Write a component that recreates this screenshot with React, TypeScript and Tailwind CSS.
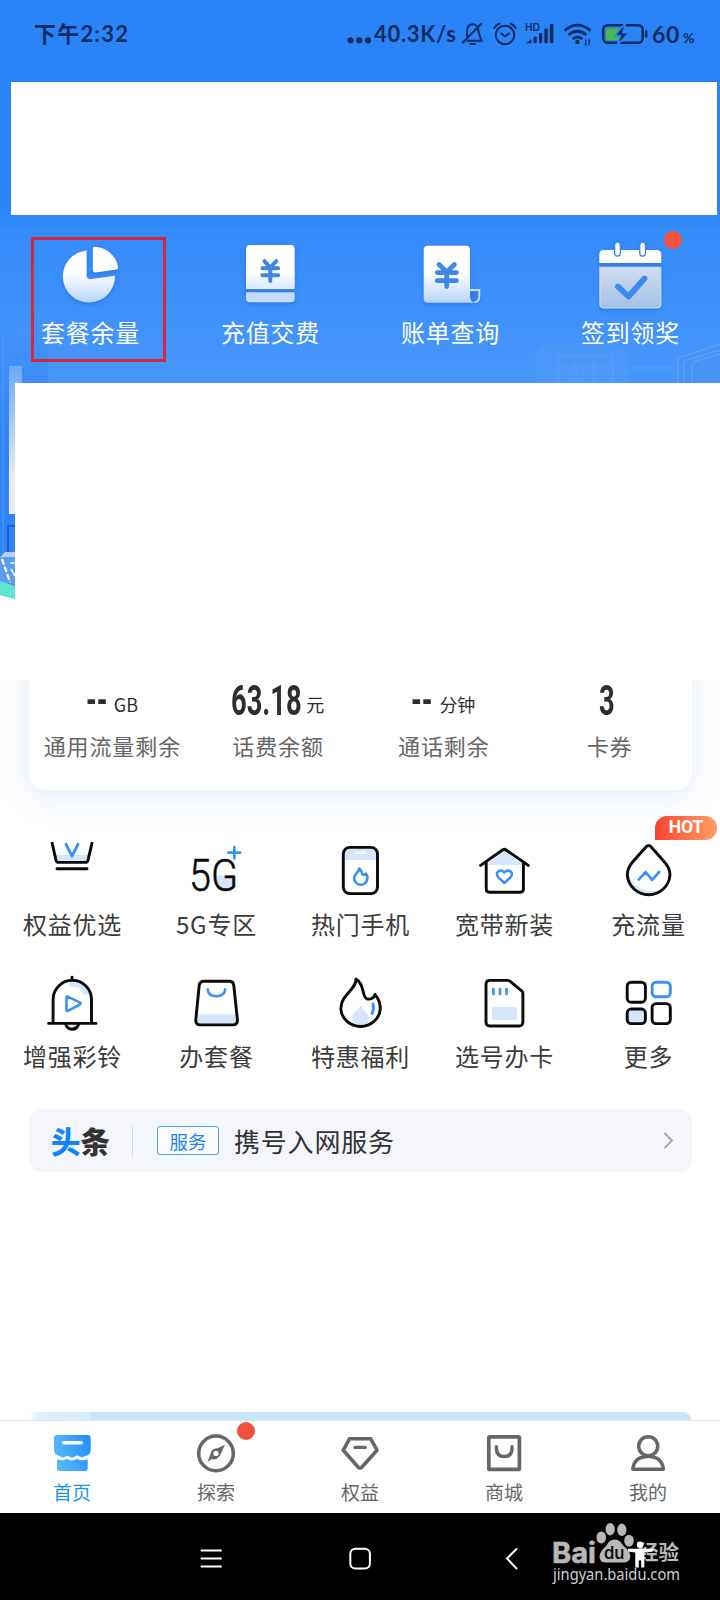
import { ReactNode } from 'react';

const BLUE = '#3a94ee';
const PALE = '#d6e6fa';

const quickActions = [
  { label: '套餐余量', icon: <PieIcon />, active: true },
  { label: '充值交费', icon: <RechargeIcon /> },
  { label: '账单查询', icon: <BillIcon /> },
  { label: '签到领奖', icon: <CheckInIcon />, dot: true },
];

const stats = [
  { value: '--', unit: 'GB', label: '通用流量剩余', width: 'w-[22px]' },
  { value: '63.18', unit: '元', label: '话费余额', width: 'w-[69px]' },
  { value: '--', unit: '分钟', label: '通话剩余', width: 'w-[22px]' },
  { value: '3', unit: '', label: '卡券', width: 'w-[21px]' },
];

const services = [
  { label: '权益优选', icon: <CrownIcon /> },
  { label: '5G专区', icon: <FiveGIcon /> },
  { label: '热门手机', icon: <PhoneIcon /> },
  { label: '宽带新装', icon: <HouseIcon /> },
  { label: '充流量', icon: <DropIcon />, hot: true },
  { label: '增强彩铃', icon: <BellIcon /> },
  { label: '办套餐', icon: <BagIcon /> },
  { label: '特惠福利', icon: <FlameIcon /> },
  { label: '选号办卡', icon: <SimIcon /> },
  { label: '更多', icon: <MoreIcon /> },
];

const tabs = [
  { label: '首页', icon: <HomeTabIcon />, active: true },
  { label: '探索', icon: <CompassIcon />, dot: true },
  { label: '权益', icon: <DiamondIcon /> },
  { label: '商城', icon: <ShopIcon /> },
  { label: '我的', icon: <UserIcon /> },
];

/* ---------- hero icons (80 x 80) ---------- */

function HeroSvg({ children }: { children: ReactNode }) {
  return (
    <svg width="80" height="80" viewBox="0 0 80 80" fill="none" className="overflow-visible drop-shadow-[0_2px_2px_rgba(20,80,180,0.35)]">
      <defs>
        <linearGradient id="heroFill" x1="0" y1="10" x2="0" y2="68" gradientUnits="userSpaceOnUse">
          <stop offset="0.45" stopColor="#ffffff" />
          <stop offset="1" stopColor="#b4d3fb" />
        </linearGradient>
        <linearGradient id="heroGrey" x1="0" y1="30" x2="0" y2="73" gradientUnits="userSpaceOnUse">
          <stop offset="0" stopColor="#d3deef" />
          <stop offset="1" stopColor="#a3bfe8" />
        </linearGradient>
      </defs>
      {children}
    </svg>
  );
}

function PieIcon() {
  return (
    <HeroSvg>
      <path d="M36.6 14.4 V39 Q36.6 43.4 41 43 L65 39.7 A26.1 26.1 0 1 1 36.6 14.4 Z" fill="url(#heroFill)" />
      <path d="M42.8 12.4 Q42.8 10.6 44.6 10.8 A24.5 24.5 0 0 1 68.2 31.6 Q68.4 33.4 66.5 33.6 L45.8 36.5 Q42.8 36.8 42.8 34 Z" fill="#fff" />
    </HeroSvg>
  );
}

function RechargeIcon() {
  return (
    <HeroSvg>
      <path d="M16 53.3 V13 Q16 9 20 9 H60.7 Q64.7 9 64.7 13 V53.3 Z" fill="url(#heroFill)" />
      <path d="M16 53.3 H64.7 V56.3 H16 Z" fill="#3b80dc" />
      <path d="M16 56.3 H64.7 V62.5 Q64.7 66.3 60.7 66.3 H20 Q16 66.3 16 62.5 Z" fill="#c4dbfb" />
      <path d="M34.4 25.2 L40.3 31.5 L46.2 25.2 M40.3 31.5 V45 M32.4 32.2 H48.2 M32.4 39.2 H48.2" stroke="#4087e4" strokeWidth="4" strokeLinecap="round" />
    </HeroSvg>
  );
}

function BillIcon() {
  return (
    <HeroSvg>
      <path d="M60 54 H69.3 V60.5 Q69.3 66 64.5 66" stroke="#c4dcfb" strokeWidth="2" />
      <path d="M61.2 55.5 H67.2 V61 Q67 64.5 64.5 64.5 Q61.2 64.5 61.2 60 Z" fill="#3b7fdc" />
      <path d="M18 9.7 H56 Q60 9.7 60 13.7 V61 Q60.5 66.7 65.5 66.7 H18 Q13.7 66.7 13.7 62.5 V13.7 Q13.7 9.7 18 9.7 Z" fill="url(#heroFill)" />
      <path d="M29 28.5 L36.7 36 L44.4 28.5 M36.7 36 V50.6 M27.3 36.6 H46.4 M27.3 44.7 H46.4" stroke="#4087e4" strokeWidth="4.8" strokeLinecap="round" />
    </HeroSvg>
  );
}

function CheckInIcon() {
  return (
    <HeroSvg>
      <path d="M9.3 26.9 V18.5 Q9.3 14 13.8 14 H66.8 Q71.3 14 71.3 18.5 V26.9 Z" fill="#fff" />
      <path d="M9.9 31.3 H70.8 V68 Q70.8 71.8 67 71.8 H13.7 Q9.9 71.8 9.9 68 Z" fill="url(#heroGrey)" stroke="#c9dcf6" strokeWidth="1.2" />
      <path d="M27.5 9 V17.2 M52.6 9 V17.2" stroke="#3c86ea" strokeWidth="7" strokeLinecap="round" />
      <path d="M27.5 9 V17.2 M52.6 9 V17.2" stroke="#fff" strokeWidth="4.4" strokeLinecap="round" />
      <path d="M28 50.5 L38.5 60.5 L54.5 42.5" stroke="#3b89f1" strokeWidth="5.8" strokeLinecap="round" strokeLinejoin="round" />
    </HeroSvg>
  );
}

/* ---------- service icons (60 x 60) ---------- */

function ServiceSvg({ children }: { children: ReactNode }) {
  return (
    <svg width="60" height="60" viewBox="0 0 60 60" fill="none" stroke="#0a0a0a" strokeWidth="2.9" strokeLinecap="round" strokeLinejoin="round" className="overflow-visible">
      {children}
    </svg>
  );
}

function CrownIcon() {
  return (
    <ServiceSvg>
      <path d="M13 15 H47 L45 21.5 H15 Z" fill={PALE} stroke="none" />
      <path d="M9.9 2 L14 20.4 Q14.5 22.4 16.5 22.4 H43.5 Q45.5 22.4 46 20.4 L50.2 2" strokeLinecap="butt" />
      <path d="M15 28.7 H45" />
      <path d="M24 4.3 L30 16 L36 4.3" stroke={BLUE} />
    </ServiceSvg>
  );
}

function FiveGIcon() {
  return (
    <ServiceSvg>
      <path d="M31 36 Q38 34 43 38 L49 37 V43 Q48 50 40 50.5 Q32 50 31 41 Z" fill={PALE} stroke="none" />
      <text x="3" y="50.6" fontSize="44.5" textLength="49" lengthAdjust="spacingAndGlyphs" fill="#0a0a0a" stroke="#0a0a0a" strokeWidth="0.5" className="font-['Roboto',sans-serif] font-light">
        5G
      </text>
      <path d="M42.5 12.7 H54 M48.3 7 V18.5" stroke={BLUE} strokeWidth="2.7" />
    </ServiceSvg>
  );
}

function PhoneIcon() {
  return (
    <ServiceSvg>
      <path d="M14 20 V13 Q14 8 19 8 H42 Q47 8 47 13 V20 Z" fill={PALE} stroke="none" />
      <path d="M26.5 13 H35" stroke="#fff" strokeWidth="2.6" />
      <rect x="13.3" y="7.4" width="34.2" height="46.2" rx="6.5" />
      <path d="M29.2 28.6 C29.4 32 24.2 33.5 24.2 38.2 A6.6 6.6 0 0 0 37.4 38.2 C37.4 36.5 36.9 35 36 33.7 C35 34.8 33.7 34.9 32.4 34.4 C32 32 31 30 29.2 28.6 Z" stroke={BLUE} strokeWidth="2.7" />
    </ServiceSvg>
  );
}

function HouseIcon() {
  return (
    <ServiceSvg>
      <path d="M13 25 L30.3 10 L48 25 Z" fill={PALE} stroke="none" />
      <path d="M6.6 25.4 L28.5 10 Q30.3 8.7 32.1 10 L54.2 25.4" />
      <path d="M12.2 22.5 V49 Q12.2 52.2 15.4 52.2 H46.2 Q49.4 52.2 49.4 49 V22.5" />
      <path d="M30.4 43 L24.4 37.4 Q21.7 34 24 31.6 Q27.3 29.1 30.4 32.4 Q33.6 29.1 36.8 31.6 Q39.2 34 36.4 37.4 Z" stroke={BLUE} strokeWidth="2.6" />
    </ServiceSvg>
  );
}

function DropIcon() {
  return (
    <ServiceSvg>
      <path d="M10.5 32 Q14 48 31 51 Q40 52 46 49 Q40 56 31 56 Q11 55 10.5 32 Z" fill={PALE} stroke="none" />
      <path d="M28.2 6.8 Q30.6 4.2 33 6.8 L46 21.5 Q52 28 52 35 A21.4 21.2 0 0 1 9.3 35 Q9.3 28 15 21.5 Z" />
      <path d="M20.6 39.6 L27.6 32.2 L34.2 39.8 L41.2 32" stroke={BLUE} strokeWidth="2.7" />
    </ServiceSvg>
  );
}

function BellIcon() {
  return (
    <ServiceSvg>
      <path d="M27.5 12.5 Q41 11 44.5 22.5" stroke={PALE} strokeWidth="5" strokeLinecap="butt" />
      <path d="M30 5.3 V8 M11.1 51 V27.5 A19.2 19.2 0 0 1 49.5 27.5 V51 M6.6 51.4 H54" />
      <path d="M24 53 Q25 57 30 57 Q35.2 57 36.3 53 Z" fill={PALE} stroke="none" />
      <path d="M23.7 52 Q25 57.2 30 57.2 Q35.2 57.2 36.6 52" />
      <path d="M24.5 25.4 Q24.5 24 25.8 24.6 L38 30.7 Q39.4 31.6 38 32.5 L25.8 38.8 Q24.5 39.3 24.5 38 Z" stroke={BLUE} strokeWidth="2.6" />
    </ServiceSvg>
  );
}

function BagIcon() {
  return (
    <ServiceSvg>
      <path d="M10 42 H51 L52 49 Q51.5 52 49 52 H13 Q10 52 9.5 49 Z" fill={PALE} stroke="none" />
      <path d="M18 9.3 H43 Q47.3 9.3 47.8 13.5 L51.4 47.5 Q51.8 52.9 46.8 52.9 H14.2 Q9.4 52.9 9.8 47.5 L13.2 13.5 Q13.7 9.3 18 9.3 Z" />
      <path d="M21.7 17.4 Q22.2 24.2 30.4 24.2 Q38.6 24.2 39.2 17.4" stroke={BLUE} strokeWidth="2.6" />
    </ServiceSvg>
  );
}

function FlameIcon() {
  return (
    <ServiceSvg>
      <path d="M30.5 33.5 C32 38 39 40 39 47 C38 53 34 54 30.5 54 C26 54 22 51 22 46 C22 40 28 39 30.5 33.5 Z" fill={PALE} stroke="none" />
      <path d="M26 7 C26.5 18 10.8 22 10.8 37 A19.8 18.8 0 0 0 50.3 37 C50.3 31 48.5 26.5 45 22.4 C44.3 26 40.5 27.8 37 26.8 C31.5 25 35 12 26 7 Z" />
      <path d="M43 32 Q44.4 36.5 42 41.4" stroke={BLUE} />
    </ServiceSvg>
  );
}

function SimIcon() {
  return (
    <ServiceSvg>
      <rect x="18" y="35" width="25" height="13" rx="1.5" fill={PALE} stroke="none" />
      <path d="M16 8.4 H33.5 Q35 8.4 36.2 9.4 L47.6 18.8 Q48.9 20 48.9 21.5 V50 Q48.9 54 44.9 54 H16 Q12 54 12 50 V12.4 Q12 8.4 16 8.4 Z" />
      <path d="M19.4 17 V22 M26 17 V22 M32.6 17 V22" stroke={BLUE} strokeWidth="2.7" />
    </ServiceSvg>
  );
}

function MoreIcon() {
  return (
    <ServiceSvg>
      <rect x="9.2" y="10.2" width="18.2" height="20" rx="4" />
      <rect x="34.1" y="10.2" width="18.2" height="14.6" rx="4" stroke={BLUE} />
      <rect x="34.1" y="31.6" width="18.2" height="20" rx="4" />
      <rect x="9.2" y="37" width="18.2" height="14.6" rx="4" fill={PALE} />
    </ServiceSvg>
  );
}

/* ---------- tab bar icons (44 x 44) ---------- */

function TabSvg({ children }: { children: ReactNode }) {
  return (
    <svg width="44" height="44" viewBox="0 0 44 44" fill="none" stroke="#666" strokeWidth="3.8" strokeLinecap="round" strokeLinejoin="round">
      {children}
    </svg>
  );
}

function HomeTabIcon() {
  return (
    <TabSvg>
      <defs>
        <linearGradient id="homeFill" x1="4" y1="30" x2="40" y2="18" gradientUnits="userSpaceOnUse">
          <stop offset="0" stopColor="#5bbcfb" />
          <stop offset="1" stopColor="#2592fb" />
        </linearGradient>
      </defs>
      <path d="M7 5 H37.5 Q40.7 5 40.7 8 V20 Q40.5 25.5 35 26 Q31.5 28.6 28 25.5 Q26.5 25 25 26.5 Q22 28.7 19 26.3 Q17.5 25 16 26.3 Q13 28.6 9.5 26 Q4 25 4 20 V8 Q4 5 7 5 Z" fill="url(#homeFill)" stroke="none" />
      <path d="M7 29.3 Q13 31.6 16.8 28.8 Q22 32.3 27 28.8 Q31 31.6 37.7 29.3 V38.5 Q37.7 41 35.2 41 H9.5 Q7 41 7 38.5 Z" fill="url(#homeFill)" stroke="none" />
      <path d="M13.6 12.7 H31.2" stroke="#fff" strokeWidth="3.4" />
    </TabSvg>
  );
}

function CompassIcon() {
  return (
    <TabSvg>
      <circle cx="22" cy="23.4" r="17.3" strokeWidth="3.5" />
      <path d="M31 14.8 L25.8 26 Q22 30.5 17.8 29 L13.4 32 L17.4 21.5 Q19.5 18 23.5 18.2 Z" fill="#666" stroke="none" />
      <circle cx="22" cy="23.4" r="2.6" fill="#fff" stroke="none" />
    </TabSvg>
  );
}

function DiamondIcon() {
  return (
    <TabSvg>
      <path d="M11.5 8.8 H32.8 L39 20.2 L24 37 Q22 39.3 20 37 L5.3 20.2 Z" strokeWidth="3.6" />
      <path d="M17 17.4 H27.3" strokeWidth="3.2" />
    </TabSvg>
  );
}

function ShopIcon() {
  return (
    <TabSvg>
      <rect x="6.8" y="6.8" width="30.6" height="32.6" rx="1" strokeWidth="3.7" />
      <path d="M14.4 16.8 V18.8 Q14.8 26.6 22.2 26.6 Q29.6 26.6 30 18.8 V16.8" strokeWidth="3.5" />
    </TabSvg>
  );
}

function UserIcon() {
  return (
    <TabSvg>
      <circle cx="22.2" cy="16.3" r="9.5" strokeWidth="3.5" />
      <path d="M6.8 39.3 Q8 26.4 22.2 26.4 Q36 26.4 37.4 39.3 Z" strokeWidth="3.5" />
    </TabSvg>
  );
}

/* ---------- sections ---------- */

function StatusBar() {
  return (
    <div className="flex h-[82px] items-start pl-[34px] pt-[18px] text-[#0b2c60]">
      <div className="w-[312px] text-[22px] leading-8 font-bold tracking-[1.2px] font-['Lato','Noto_Sans_CJK_SC',sans-serif]">下午2:32</div>
      <svg width="28" height="32" fill="currentColor">
        <circle cx="4.5" cy="22.3" r="3.1" />
        <circle cx="13.3" cy="22.3" r="3.1" />
        <circle cx="22" cy="22.3" r="3.1" />
      </svg>
      <div className="w-[87px] whitespace-nowrap text-[22px] leading-8 font-bold tracking-[0.7px] font-['Lato',sans-serif]">40.3K/s</div>
      <svg width="32" height="32" fill="none" stroke="currentColor" strokeWidth="2" strokeLinecap="round">
        <path d="M2 24.5 L20 6 M6 18 V14 Q6 6.5 11.5 6.3 Q14 6.3 15.5 7.8 M17 11 Q18 17 20.5 22.7 H6.5 M9.5 26 H14" />
      </svg>
      <svg width="32" height="32" fill="none" stroke="currentColor" strokeWidth="2" strokeLinecap="round">
        <circle cx="12" cy="17" r="9.3" />
        <path d="M8.5 15.5 L12 18.5 L16 15.5 M1.2 10 Q3 7 6.3 5.8 M22.8 10 Q21 7 17.7 5.8" />
      </svg>
      <svg width="38" height="32" fill="currentColor">
        <text x="0" y="12.8" fontSize="10.5" textLength="15" lengthAdjust="spacingAndGlyphs" className="font-['Lato',sans-serif] font-bold">HD</text>
        <path d="M1 25.2 L6.4 21 V25.2 Z" />
        <rect x="8.5" y="18.5" width="3.2" height="6.7" rx="1" />
        <rect x="14" y="15" width="3.2" height="10.2" rx="1" />
        <rect x="19.4" y="10.5" width="3.4" height="14.7" rx="1" />
        <rect x="24.8" y="6" width="3.6" height="19.2" rx="1" />
      </svg>
      <svg width="38" height="32" fill="none" stroke="currentColor" strokeWidth="2.8">
        <path d="M1.5 12.6 Q14.5 1.6 27.5 12.6 M5.6 17 Q14.5 9.6 23.4 17 M9.7 21 Q14.5 17.2 19.3 21" />
        <circle cx="14.5" cy="24" r="2.2" fill="currentColor" stroke="none" />
        <path d="M22.8 21.5 V27 L21.5 25.5 M26 27.5 V22 L27.3 23.5" strokeWidth="1.3" />
      </svg>
      <svg width="51" height="32" fill="none">
        <rect x="2.2" y="7.2" width="39.5" height="17.6" rx="4.5" stroke="currentColor" strokeWidth="2.6" />
        <rect x="5" y="10.5" width="12.5" height="11.4" rx="1.5" fill="#4cb84b" />
        <path d="M24.5 5 L14 17.6 H19.5 L16.5 27 L28 14.8 H22 Z" fill="currentColor" stroke="#2a83f8" strokeWidth="1.6" />
        <path d="M45.2 13.6 V18.4" stroke="currentColor" strokeWidth="2.6" strokeLinecap="round" />
      </svg>
      <div className="text-[23px] leading-8 font-bold tracking-[0.7px] font-['Lato',sans-serif]">
        60<span className="ml-[3px] text-[14px]">%</span>
      </div>
    </div>
  );
}

function Skyline() {
  return (
    <svg width="720" height="600" viewBox="0 0 720 600" fill="none" className="absolute inset-0">
      <defs>
        <linearGradient id="pillar" x1="0" y1="366" x2="0" y2="514" gradientUnits="userSpaceOnUse">
          <stop offset="0" stopColor="#6ba9fa" />
          <stop offset="0.35" stopColor="#a5c8f6" />
          <stop offset="0.75" stopColor="#e8ebf2" />
          <stop offset="1" stopColor="#ebebeb" />
        </linearGradient>
        <linearGradient id="wall" x1="0" y1="320" x2="0" y2="600" gradientUnits="userSpaceOnUse">
          <stop offset="0" stopColor="#2f7fef" stopOpacity="0" />
          <stop offset="0.4" stopColor="#2e82f3" />
          <stop offset="1" stopColor="#3385f2" />
        </linearGradient>
      </defs>
      <path d="M0 330 L48 342 V600 H0 Z" fill="url(#wall)" opacity="0.75" />
      <path d="M3 335 V585" stroke="#4e9af8" strokeWidth="2" opacity="0.5" />
      <rect x="9" y="366" width="13" height="148" fill="url(#pillar)" />
      <path d="M15 526 H8 V578" stroke="#1c60cf" strokeWidth="2" />
      <path d="M535 383 V353 L546 343 H616 L628 353 V383 Z" fill="#5fa2f5" opacity="0.22" />
      <path d="M558 383 V356 H613 V383 M576 356 V383 M594 356 V383 M558 368 H613 M628 368 H677" stroke="#74b0fa" strokeWidth="1" opacity="0.4" />
      <path d="M678 383 V358 L720 344 V383 Z" fill="#4a90ee" opacity="0.35" />
      <path d="M678 383 V358 L720 344 M684 383 V361 L720 350 M692 383 V362 L720 354" stroke="#7db5fb" strokeWidth="1.2" opacity="0.45" />
      <path d="M0 557 L5 552 H15 V585 L0 582 Z" fill="#5d9cf0" />
      <path d="M0 558 L5 552 H15 V557 H4 Z" fill="#b4d0f4" />
      <path d="M2 559 L10 582" stroke="#fff" strokeWidth="2.2" strokeDasharray="6 2" />
      <path d="M10 563 H15 M11 569 L15 576" stroke="#e9f1fc" strokeWidth="1.6" />
      <path d="M0 581 L15 586 V599 L0 595 Z" fill="#5ee6cf" />
      <path d="M0 595 L15 599 V600 H0 Z" fill="#fff" />
    </svg>
  );
}

function Hero() {
  return (
    <div className="relative h-[680px] bg-white">
      <div className="absolute inset-x-0 top-0 h-[600px] bg-[linear-gradient(180deg,#2a84f8_0px,#2a84f8_205px,#348bfa_230px,#4896fa_383px,#2f86f6_480px,#2f86f6_600px)]" />
      <Skyline />
      <div className="relative">
        <StatusBar />
        <div className="mr-[3px] ml-[11px] h-[133px] bg-white" />
        <div className="grid h-[168px] grid-cols-4 pt-[21px]">
          {quickActions.map((item) => (
            <div key={item.label} className="relative flex flex-col items-center">
              {item.icon}
              <span className="mt-[2px] pl-[1px] text-[24px] leading-[28px] tracking-[0.8px] text-white">{item.label}</span>
              {item.active && <div className="absolute top-px left-[31px] h-[125px] w-[135px] border-[3px] border-[#d22a3c]" />}
              {item.dot && <div className="absolute -top-[5px] left-[124px] size-[18px] rounded-full bg-[#f4523c]" />}
            </div>
          ))}
        </div>
        <div className="ml-[15px] h-[297px] bg-white" />
      </div>
    </div>
  );
}

function StatsCard() {
  return (
    <div className="h-[160px] overflow-hidden px-[29px]">
      <div className="-mt-10 grid h-[150px] w-[663px] grid-cols-4 rounded-2xl bg-white pt-9 shadow-[0_8px_32px_rgba(50,110,220,0.13)]">
        {stats.map((stat) => (
          <div key={stat.label} className="flex flex-col items-center">
            <div className="flex h-[50px] items-baseline whitespace-nowrap text-[#2e2e2e]">
              <span className={`${stat.width} text-[42px] leading-[50px] font-bold font-['Roboto',sans-serif]`}>
                <span className="inline-block origin-left scale-x-[0.65]">{stat.value}</span>
              </span>
              {stat.unit && <span className="relative -top-[3px] ml-[6px] text-[18px] leading-none">{stat.unit}</span>}
            </div>
            <span className="mt-[5px] pl-[1px] text-[22px] leading-[28px] tracking-[0.9px] text-[#666]">{stat.label}</span>
          </div>
        ))}
      </div>
    </div>
  );
}

function Services() {
  return (
    <div className="grid grid-cols-5 gap-y-8">
      {services.map((item) => (
        <div key={item.label} className="relative flex flex-col items-center">
          {item.icon}
          <span className="mt-[10px] h-[30px] pl-[1px] text-[24px] leading-[28px] tracking-[0.8px] text-[#3c3c3c]">{item.label}</span>
          {item.hot && (
            <div className="absolute -top-[24px] left-[79px] flex h-6 w-[62px] items-center justify-center rounded-full rounded-bl-none bg-linear-to-r from-[#f93f30] to-[#fd9c62] pb-px text-[17.5px] leading-none font-bold text-white font-['Roboto',sans-serif]">
              HOT
            </div>
          )}
        </div>
      ))}
    </div>
  );
}

function Headline() {
  return (
    <div className="mt-[37px] ml-[29px] flex h-[63px] w-[663px] items-center rounded-xl bg-[#f5f6fc] pr-[18px] pl-[22px]">
      <div className="w-[58px] whitespace-nowrap text-[29.5px] leading-none font-black text-[#333]">
        <span className="text-[#1284fb]">头</span>条
      </div>
      <div className="ml-[23px] h-[31px] w-px bg-[#c8dcf4]" />
      <div className="ml-[24px] flex h-[29px] w-[62px] items-center justify-center rounded-[3px] border border-[#4aa0f0] bg-white/60 pt-px text-[18.5px] leading-none text-[#1a86ee]">服务</div>
      <div className="ml-[15px] flex-1 text-[26px] leading-none tracking-[0.8px] text-[#333]">携号入网服务</div>
      <svg width="11" height="17" fill="none" stroke="#aaa" strokeWidth="2" strokeLinecap="round">
        <path d="M2 1.5 L9 8.5 L2 15.5" />
      </svg>
    </div>
  );
}

function TabBar() {
  return (
    <div className="grid h-[93px] grid-cols-5 border-t border-[#e2e4e6] bg-white pt-[9px]">
      {tabs.map((tab) => (
        <div key={tab.label} className="relative flex flex-col items-center">
          {tab.icon}
          <span className={`mt-[5px] text-[19px] leading-[26px] ${tab.active ? 'text-[#1795f5]' : 'text-[#666]'}`}>{tab.label}</span>
          {tab.dot && <div className="absolute -top-[8px] left-[93px] size-[18px] rounded-full bg-[#ef5340]" />}
        </div>
      ))}
    </div>
  );
}

function SystemNav() {
  return (
    <div className="flex h-[87px] bg-black">
      <svg width="552" height="87" fill="none" stroke="#fff" strokeWidth="2">
        <path d="M201.5 37.5 H221 M201.5 45.5 H221 M201.5 53.5 H221" strokeLinecap="round" />
        <rect x="350.3" y="35.8" width="19.6" height="19.6" rx="5" />
        <path d="M516.5 36 L507 45.5 L516.5 55.5" strokeLinecap="round" />
      </svg>
      <svg width="140" height="73" viewBox="0 -7 140 73" fill="#b8b8b8" className="overflow-visible">
        <text x="0" y="42.5" fontSize="28.5" textLength="44" lengthAdjust="spacingAndGlyphs" stroke="#b8b8b8" strokeWidth="0.6" className="font-['Inter',sans-serif] font-bold">Bai</text>
        <ellipse cx="49.3" cy="17.5" rx="4.8" ry="6" />
        <ellipse cx="58.2" cy="9.2" rx="4.6" ry="6.2" />
        <ellipse cx="69.8" cy="9.8" rx="4.6" ry="6.2" />
        <ellipse cx="77" cy="20.8" rx="4.8" ry="6" />
        <path d="M62.5 19.5 Q68 19.5 70.5 25 Q78 31 78.5 36 Q78 43 70 42.6 H54 Q47.5 42.5 47.5 36.5 Q48 31 54.5 25.5 Q57 19.5 62.5 19.5 Z" />
        <text x="52" y="38.5" fontSize="17" textLength="20.5" lengthAdjust="spacingAndGlyphs" fill="#111" className="font-['Inter',sans-serif] font-semibold">du</text>
        <text x="86" y="40" fontSize="20.5" className="font-['Noto_Sans_CJK_SC',sans-serif] font-bold">经验</text>
        <g fill="#fff">
          <circle cx="88" cy="24.8" r="3.2" />
          <path d="M76 28.8 H101 V31.4 L92.3 32.5 V47.5 H89.2 V40 H86.8 V47.5 H83.3 V32.5 L76 31.4 Z" />
        </g>
        <text x="1" y="59.5" fontSize="16.5" textLength="127" lengthAdjust="spacingAndGlyphs" fill="#d0d0d0" className="font-['Noto_Sans',sans-serif]">jingyan.baidu.com</text>
      </svg>
    </div>
  );
}

export default function App() {
  return (
    <div className="flex h-[1600px] w-[720px] flex-col overflow-hidden bg-white font-['Noto_Sans_CJK_SC',sans-serif]">
      <Hero />
      <StatsCard />
      <Services />
      <Headline />
      <div className="mt-auto ml-[29px] h-2 w-[662px] rounded-tr-lg bg-[linear-gradient(90deg,#ffffff_0px,#dff0fd_10px,#d8ecfd_60px,#cae6fd_62px)]" />
      <TabBar />
      <SystemNav />
    </div>
  );
}
